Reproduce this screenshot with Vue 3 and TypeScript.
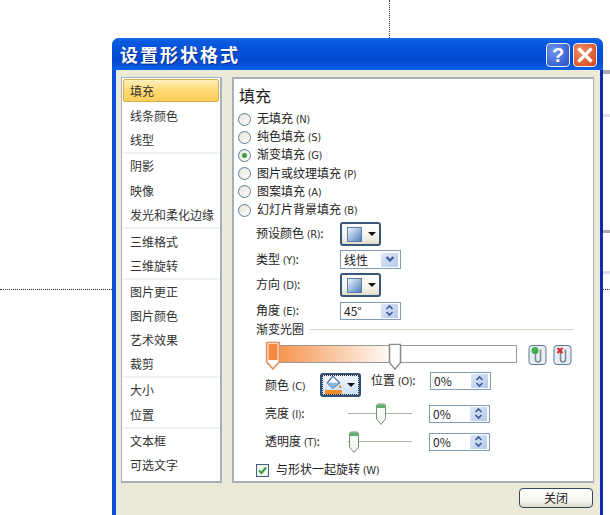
<script setup lang="ts">
interface NavItem { label: string; h: number; sel?: boolean; sep?: boolean }
const nav: NavItem[] = [
  { label: '填充', h: 25, sel: true },
  { label: '线条颜色', h: 25 },
  { label: '线型', h: 26, sep: true },
  { label: '阴影', h: 24 },
  { label: '映像', h: 25 },
  { label: '发光和柔化边缘', h: 26, sep: true },
  { label: '三维格式', h: 25 },
  { label: '三维旋转', h: 26, sep: true },
  { label: '图片更正', h: 24 },
  { label: '图片颜色', h: 23 },
  { label: '艺术效果', h: 25 },
  { label: '裁剪', h: 26, sep: true },
  { label: '大小', h: 24 },
  { label: '位置', h: 27, sep: true },
  { label: '文本框', h: 24 },
  { label: '可选文字', h: 24 },
]
const radios = [
  { t: '无填充', k: '(N)' },
  { t: '纯色填充', k: '(S)' },
  { t: '渐变填充', k: '(G)', on: true },
  { t: '图片或纹理填充', k: '(P)' },
  { t: '图案填充', k: '(A)' },
  { t: '幻灯片背景填充', k: '(B)' },
]
</script>

<template>
  <div class="desk">
    <i class="guide-v"></i>
    <i class="guide-h"></i>
    <i class="guide-r"></i>
    <i class="stub s1"></i>
    <i class="stub s2"></i>
    <i class="stub s3"></i>
    <i class="stub s4"></i>
    <div class="win">
      <header class="title">
        <span class="title-text">设置形状格式</span>
        <button class="cap help">?</button>
        <button class="cap close">
          <svg width="16" height="16" viewBox="0 0 16 16"><path d="M2.5 2.5 13.5 13.5M13.5 2.5 2.5 13.5" stroke="#fff" stroke-width="3.2" stroke-linecap="square" /></svg>
        </button>
      </header>
      <div class="body">
        <div class="panes">
          <nav class="nav">
            <div v-for="n in nav" :key="n.label" class="nav-item" :class="{ sel: n.sel, sep: n.sep }" :style="{ height: n.h + 'px' }">
              <span>{{ n.label }}</span>
            </div>
          </nav>
          <main class="main">
            <h1 class="heading">填充</h1>
            <div class="radios">
              <div v-for="r in radios" :key="r.t" class="radio-row">
                <span class="radio" :class="{ on: r.on }"></span>
                <span>{{ r.t }} <small>{{ r.k }}</small></span>
              </div>
            </div>
            <div class="form-row r1">
              <span class="lab">预设颜色 <small>(R)</small>:</span>
              <button class="split"><i class="swatch"></i><i class="tri"></i></button>
            </div>
            <div class="form-row r2">
              <span class="lab">类型 <small>(Y)</small>:</span>
              <div class="field sel-field"><span class="val">线性</span>
                <span class="spin one"><svg width="10" height="7" viewBox="0 0 10 7"><path d="M1.5 1 5 4.5 8.500 1" fill="none" stroke="#3d5a94" stroke-width="2.200" /></svg></span>
              </div>
            </div>
            <div class="form-row r3">
              <span class="lab">方向 <small>(D)</small>:</span>
              <button class="split"><i class="swatch"></i><i class="tri"></i></button>
            </div>
            <div class="form-row r4">
              <span class="lab">角度 <small>(E)</small>:</span>
              <div class="field short"><span class="val">45°</span>
                <span class="spin"><svg width="9" height="13" viewBox="0 0 9 13"><path d="M1.500 5 4.500 2 7.500 5M1.500 8 4.500 11 7.500 8" fill="none" stroke="#3d5a94" stroke-width="1.600" /></svg></span>
              </div>
            </div>
            <div class="group-title"><span>渐变光圈</span><i></i></div>
            <div class="stops">
              <div class="bar">
                <svg class="stop s-a" width="16" height="30" viewBox="0 0 14 30" preserveAspectRatio="none"><path d="M1.500 1.500H12.500V21L7 28 1.500 21Z" fill="#fff" stroke="#e2935e" stroke-width="1.500" /><rect x="3" y="3" width="8" height="16" fill="#f58a3e" /></svg>
                <svg class="stop s-b" width="14" height="28" viewBox="0 0 14 30" preserveAspectRatio="none"><path d="M1.500 1.500H12.500V21L7 28 1.500 21Z" fill="#fff" stroke="#8a8a8a" stroke-width="1.500" /></svg>
              </div>
              <svg class="clip" width="19" height="20" viewBox="0 0 19 20"><rect x="1" y=".5" width="17" height="19" rx="3" fill="#e9eef5" stroke="#5c7797" /><path d="M7.500 6V14.500A2.500 2.500 0 0 0 12.500 14.500V4.500" fill="none" stroke="#7c8794" stroke-width="1.500" /><circle cx="7" cy="5.500" r="3.500" fill="#3fae47" /></svg>
              <svg class="clip" width="19" height="20" viewBox="0 0 19 20"><rect x="1" y=".5" width="17" height="19" rx="3" fill="#e9eef5" stroke="#5c7797" /><path d="M7.500 6V14.500A2.500 2.500 0 0 0 12.500 14.500V4.500" fill="none" stroke="#7c8794" stroke-width="1.500" /><path d="M4.500 3 9.500 8M9.500 3 4.500 8" stroke="#d62f2f" stroke-width="2.200" /></svg>
            </div>
            <div class="color-row">
              <span class="lab2 w55">颜色 <small>(C)</small></span>
              <button class="split paint">
                <svg width="20" height="20" viewBox="0 0 18 18"><path d="M8 1 14 7 8 12 3 7Z" fill="#fff" stroke="#3d6fa8" /><path d="M3 7H13L8 12Z" fill="#8db4dc" /><path d="M14.500 8.500 16 11.500H13Z" fill="#e8842e" /><rect x="1" y="13.500" width="15" height="4" fill="#f58a2c" /></svg>
                <i class="tri"></i>
              </button>
              <span class="pos-lab">位置 <small>(O)</small>:</span>
              <div class="field short"><span class="val">0%</span>
                <span class="spin"><svg width="9" height="13" viewBox="0 0 9 13"><path d="M1.500 5 4.500 2 7.500 5M1.500 8 4.500 11 7.500 8" fill="none" stroke="#3d5a94" stroke-width="1.600" /></svg></span>
              </div>
            </div>
            <div class="slide-row b">
              <span class="lab2 w83">亮度 <small>(I)</small>:</span>
              <div class="track"><svg class="thumb t-mid" width="12" height="23" viewBox="0 0 12 23"><path d="M1.500 3Q1.500 1 3.500 1H8.500Q10.500 1 10.500 3V16L6 21.500 1.500 16Z" fill="#f7f7f3" stroke="#78907e" /><path d="M2 5V3Q2 1.500 3.500 1.500H8.500Q10 1.500 10 3V5Z" fill="#5fb26a" /></svg></div>
              <div class="field short"><span class="val">0%</span>
                <span class="spin"><svg width="9" height="13" viewBox="0 0 9 13"><path d="M1.500 5 4.500 2 7.500 5M1.500 8 4.500 11 7.500 8" fill="none" stroke="#3d5a94" stroke-width="1.600" /></svg></span>
              </div>
            </div>
            <div class="slide-row t">
              <span class="lab2 w83">透明度 <small>(T)</small>:</span>
              <div class="track"><svg class="thumb t-left" width="12" height="23" viewBox="0 0 12 23"><path d="M1.500 3Q1.500 1 3.500 1H8.500Q10.500 1 10.500 3V16L6 21.500 1.500 16Z" fill="#f7f7f3" stroke="#78907e" /><path d="M2 5V3Q2 1.500 3.500 1.500H8.500Q10 1.500 10 3V5Z" fill="#5fb26a" /></svg></div>
              <div class="field short"><span class="val">0%</span>
                <span class="spin"><svg width="9" height="13" viewBox="0 0 9 13"><path d="M1.500 5 4.500 2 7.500 5M1.500 8 4.500 11 7.500 8" fill="none" stroke="#3d5a94" stroke-width="1.600" /></svg></span>
              </div>
            </div>
            <div class="check-row">
              <span class="check"><svg width="11" height="11" viewBox="0 0 11 11"><path d="M2 5.500 4.500 8 9 2.500" fill="none" stroke="#2fa03c" stroke-width="2" /></svg></span>
              <span>与形状一起旋转 <small>(W)</small></span>
            </div>
          </main>
        </div>
        <div class="foot"><button class="close-btn">关闭</button></div>
      </div>
    </div>
  </div>
</template>

<style>
html, body { margin: 0; background: #fff; overflow: hidden; }
</style>

<style scoped>
.desk {
  position: relative;
  width: 610px;
  height: 515px;
  overflow: hidden;
  padding: 38px 7px 0 112px;
  box-sizing: border-box;
  background: #fff;
  font: 12px/14px "Noto Sans CJK SC", "Liberation Sans", sans-serif;
  color: #222;
}
.guide-v { position: absolute; left: 389px; top: 0; height: 38px; border-left: 1px dotted #333; }
.guide-h { position: absolute; left: 0; top: 289px; width: 112px; border-top: 1px dotted #333; }
.guide-r { position: absolute; left: 603px; top: 289px; width: 7px; border-top: 1px dotted #333; }
.stub { position: absolute; left: 603px; width: 7px; }
.s1 { top: 70px; height: 4px; background: #a9acb0; }
.s2 { top: 114px; height: 3px; background: #dde0ea; }
.s3 { top: 230px; height: 3px; background: #a9acb0; }
.s4 { top: 271px; height: 3px; background: #dde0ea; }
.win {
  width: 491px;
  height: 477px;
  display: flex;
  flex-direction: column;
  background: linear-gradient(90deg, #0b50d8 0, #0b50d8 50%, #0b2cb2 50%, #0b2cb2 100%);
  border-radius: 7px 7px 0 0;
}
.title {
  height: 32px;
  flex: none;
  display: flex;
  align-items: flex-start;
  padding: 5px 6px 0 8px;
  box-sizing: border-box;
  border-radius: 7px 7px 0 0;
  background: linear-gradient(#1a6ee6 0, #0a5ae0 10%, #0450d8 45%, #0348cc 70%, #0a62ea 100%);
}
.title-text {
  flex: 1;
  margin-top: -1px;
  font-size: 18px;
  line-height: 24px;
  font-weight: 700;
  letter-spacing: 2px;
  color: #fff;
  text-shadow: 1px 1px 0 #0a2f90;
}
.cap {
  width: 24px;
  height: 24px;
  margin-left: 3px;
  padding: 0;
  box-sizing: border-box;
  display: flex;
  align-items: center;
  justify-content: center;
  border: 1px solid #e8eefa;
  border-radius: 4px;
}
.help {
  background: radial-gradient(circle at 30% 30%, #6e94ec, #3a63d4 70%, #2b4fc0);
  color: #fff;
  font: 700 20px/22px "Liberation Sans", sans-serif;
}
.close { background: radial-gradient(circle at 30% 30%, #ee8a62, #dc5a2c 70%, #c2401c); }
.body {
  flex: 1;
  margin: 0 3px 0 4px;
  background: #ece9d8;
  display: flex;
  flex-direction: column;
  padding: 7px 6px 0 5px;
  min-height: 0;
}
.panes { display: flex; gap: 10px; height: 406px; flex: none; }
.nav {
  width: 101px;
  box-sizing: border-box;
  background: #fff;
  border: 1px solid #a5b0bd;
  border-width: 1px 2px 2px 1px;
  padding: 0 1px;
}
.nav-item {
  display: flex;
  align-items: center;
  padding-left: 7px;
  box-sizing: border-box;
  font-size: 12px;
  color: #333;
}
.nav-item.sep { border-bottom: 2px solid #eef0f2; }
.nav-item.sel {
  height: 23px !important;
  margin: 1px 0;
  background: linear-gradient(#fff0b8, #fdd86f 55%, #fbcf5c);
  border: 1px solid #d9ac4a;
  border-radius: 2px;
  padding-left: 6px;
}
.main {
  flex: 1;
  box-sizing: border-box;
  background: #fff;
  border: 1px solid #a5b0bd;
  border-width: 2px 1px 2px 2px;
  padding: 6px 0 0 5px;
  min-width: 0;
}
.heading { margin: 0; font-size: 16px; line-height: 20px; font-weight: 400; color: #222; }
small { font: 10px/14px "DejaVu Sans", sans-serif; letter-spacing: -.4px; color: #333; }
.radios { margin: 5px 0 0 -1px; }
.radio-row { display: flex; align-items: center; gap: 6px; height: 18.2px; white-space: nowrap; }
.radio {
  width: 13px;
  height: 13px;
  flex: none;
  box-sizing: border-box;
  border: 1px solid #5f7c96;
  border-radius: 50%;
  background: linear-gradient(135deg, #e4e3da, #fff);
  display: flex;
  align-items: center;
  justify-content: center;
}
.radio.on::after { content: ""; width: 5px; height: 5px; border-radius: 50%; background: #3f9d48; }
.form-row { display: flex; align-items: center; margin-left: 17px; }
.lab { width: 84px; flex: none; white-space: nowrap; }
.r1 { margin-top: 3px; height: 24px; }
.r2 { margin-top: 4px; height: 19px; }
.r3 { margin-top: 4px; height: 24px; }
.r4 { margin-top: 4px; height: 19px; }
.split {
  width: 41px;
  height: 24px;
  padding: 0 0 0 5px;
  box-sizing: border-box;
  display: flex;
  align-items: center;
  gap: 6px;
  background: linear-gradient(#fff, #f3f1e8 70%, #dedbcb);
  border: 2px solid #38587a;
  border-radius: 3px;
}
.swatch {
  width: 15px;
  height: 15px;
  box-sizing: border-box;
  border: 1px solid #5d7da8;
  background: linear-gradient(135deg, #f0f4fa, #4f81bd);
}
.tri { width: 0; height: 0; border: 4px solid transparent; border-top: 4px solid #111; border-bottom: 0; }
.field {
  width: 61px;
  height: 19px;
  box-sizing: border-box;
  flex: none;
  display: flex;
  align-items: center;
  justify-content: space-between;
  padding: 1px;
  border: 1px solid #7f9db9;
  background: #fff;
}
.field.short { height: 18px; }
.val { padding-left: 2px; font: 12px/14px "Noto Sans CJK SC", "DejaVu Sans", sans-serif; }
.spin {
  width: 17px;
  height: 14px;
  margin-right: 1px;
  display: flex;
  align-items: center;
  justify-content: center;
  background: linear-gradient(135deg, #dfe8f8, #b4c8ee);
}
.group-title {
  display: flex;
  align-items: center;
  gap: 6px;
  margin: 1px 0 0 17px;
  height: 16px;
}
.group-title i { flex: 1; margin-right: 20px; border-top: 1px solid #d7d3c4; }
.stops { display: flex; align-items: flex-start; margin: 8px 0 0 28px; height: 26px; }
.bar {
  position: relative;
  width: 250px;
  height: 18px;
  box-sizing: border-box;
  flex: none;
  margin-right: 11px;
  border: 1px solid #9a9a9a;
  background: linear-gradient(90deg, #f58a3e 0, #fff 51%, #fff 100%);
}
.stop { position: absolute; }
.s-a { left: -3px; top: -5px; }
.s-b { left: 120px; top: -3px; }
.clip { flex: none; margin-right: 6px; }
.color-row { display: flex; align-items: flex-start; margin: 1px 0 0 26px; height: 28px; }
.lab2 { flex: none; white-space: nowrap; }
.color-row .lab2 { margin-top: 6px; }
.w55 { width: 55px; }
.w83 { width: 83px; }
.paint {
  width: 41px;
  height: 24px;
  padding-left: 2px;
  gap: 3px;
  background: linear-gradient(#f4f8fd, #c9dff4);
  border-color: #2f5078;
  outline: 1px dotted #222;
  outline-offset: -3px;
  margin-top: 1px;
}
.pos-lab { width: 59px; margin-left: 10px; flex: none; white-space: nowrap; margin-top: 1px; }
.slide-row { display: flex; align-items: center; margin-left: 26px; height: 19px; }
.b { margin-top: 4px; }
.t { margin-top: 9px; }
.track { position: relative; width: 64px; margin-right: 17px; flex: none; height: 1px; background: #b5b2a3; }
.thumb { position: absolute; top: -10px; }
.t-mid { left: 27px; }
.t-left { left: 0; }
.check-row { display: flex; align-items: center; gap: 7px; margin: 12px 0 0 17px; height: 14px; white-space: nowrap; }
.check {
  width: 13px;
  height: 13px;
  box-sizing: border-box;
  border: 1px solid #3e6079;
  background: #f4f4ee;
  display: flex;
  align-items: center;
  justify-content: center;
}
.foot { display: flex; justify-content: flex-end; padding: 5px 1px 0 0; }
.close-btn {
  width: 74px;
  height: 20px;
  padding: 0;
  box-sizing: border-box;
  border: 1px solid #2f4a63;
  border-radius: 4px;
  background: linear-gradient(#fff, #f5f4ec 70%, #dcd8c6);
  font: 12px/14px "Noto Sans CJK SC", sans-serif;
  color: #222;
}
</style>
